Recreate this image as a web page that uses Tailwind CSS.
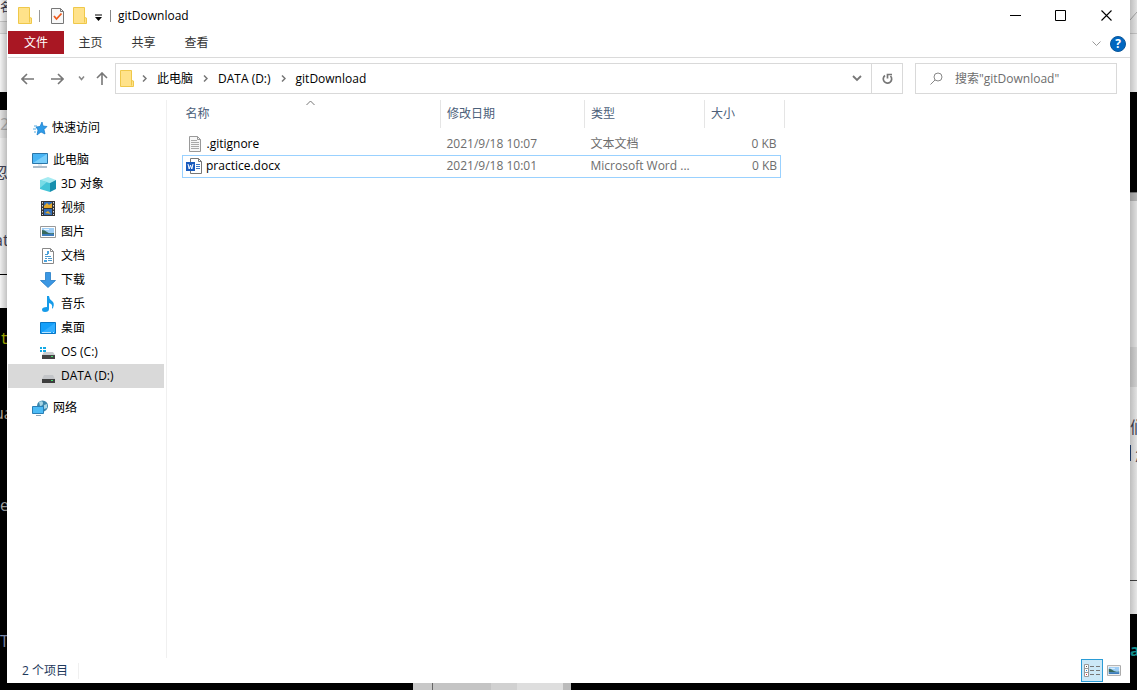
<!DOCTYPE html>
<html lang="zh-CN">
<head>
<meta charset="utf-8">
<title>gitDownload</title>
<script src="https://cdn.jsdelivr.net/npm/@tailwindcss/browser@4"></script>
</head>
<body class="h-screen overflow-hidden flex flex-col bg-black text-xs text-black font-['Open_Sans','Noto_Sans_CJK_SC',sans-serif]">
<svg class="hidden">
  <symbol id="folder" viewBox="0 0 14 17"><path d="M.5.5h11v10l2 .5v5.500H.5z" fill="#ffe28a" stroke="#efc84a"/><path d="M11.500 10v5.500" stroke="#efc84a"/></symbol>
  <symbol id="picture" viewBox="0 0 16 12"><path d="M.5.5h15v11H.5z" fill="#fff" stroke="#999"/><path d="M2 2h12v8H2z" fill="#9dcdf5"/><path d="M2 4q3 0 5 2t7 1v1H2z" fill="#37695c"/><path d="M2 8h12v2H2z" fill="#3d7cbb"/><path d="M4 3h5v1H4z" fill="#e9f6ff"/></symbol>
</svg>
<div class="flex-1 min-h-0 flex">

  <!-- page behind the window, left edge -->
  <div class="relative w-[7px] shrink-0 flex flex-col overflow-hidden whitespace-nowrap bg-black text-base" aria-hidden="true">
    <div class="h-[22px] bg-[#f1f1f1] border-b border-[#c4c4c4] text-[#334] leading-4 text-xs">名</div>
    <div class="h-[12px] bg-[#e4e4e4] border-b border-[#ccc]"></div>
    <div class="h-[58px] bg-[#f2f2f2]"></div>
    <div class="h-[18px] bg-black"></div>
    <div class="h-[28px] bg-[#e1e1e1] text-[#aaa] leading-7">2</div>
    <div class="h-[137px] bg-[#ededed] border-b border-black text-[#445] flex flex-col justify-around"><span class="leading-6 -ml-2">忽</span><span class="leading-6 -ml-1.5">at</span></div>
    <div class="h-[33px] bg-[#f3f3f3]"></div>
    <div class="flex-1 flex flex-col pt-5 text-[#aaa]"><span class="h-[73px] text-[#aab000] font-mono">t</span><span class="h-[92px] -ml-1.5 text-[#b9a99a]">ua</span><span class="h-[136px]">e</span><span class="text-[#8995b8]">T</span></div>
    <div class="absolute inset-0 bg-linear-to-r from-black/0 to-black/20"></div>
  </div>

  <main class="flex-1 min-w-0 bg-white flex flex-col">
    <header class="h-[31px] shrink-0 flex items-center pl-[11px]">
      <svg class="w-[14px] h-[17px]"><use href="#folder"/></svg>
      <span class="w-px h-3 bg-[#999] ml-[7px]"></span>
      <button aria-label="属性" class="ml-[11px]"><svg class="block" width="13" height="16" viewBox="0 0 13 16" fill="none"><path d="M.5.5h9l3 3v12H.5z" fill="#f8f8f8" stroke="#777"/><path d="M9.500.5v3h3" stroke="#777"/><path d="M3 8l2.500 3L10.500 5.500" stroke="#ee5a1c" stroke-width="1.800"/></svg></button>
      <button aria-label="新建文件夹" class="ml-[9px]"><svg class="block w-[14px] h-[17px]"><use href="#folder"/></svg></button>
      <button aria-label="自定义快速访问工具栏" class="ml-[7px] pt-1"><svg class="block" width="9" height="8" viewBox="0 0 9 8"><path d="M1 1h7" stroke="#000"/><path d="M1 3h7L4.500 7z"/></svg></button>
      <span class="w-px h-3 bg-[#888] ml-[7px]"></span>
      <h1 class="ml-[7px]">gitDownload</h1>
      <div class="ml-auto flex h-full">
        <button aria-label="最小化" class="w-[46px] grid place-items-center"><svg width="11" height="11"><path d="M0 5.500h11" stroke="#000"/></svg></button>
        <button aria-label="最大化" class="w-[45px] grid place-items-center"><svg width="11" height="11"><path d="M.5.5h10v10H.5z" fill="none" stroke="#000"/></svg></button>
        <button aria-label="关闭" class="w-[47px] grid place-items-center"><svg width="11" height="11"><path d="M.5.5l10 10M10.500.5l-10 10" stroke="#000" stroke-width="1.100"/></svg></button>
      </div>
    </header>

    <nav class="h-[27px] shrink-0 flex items-start ml-px border-b border-[#dadada] text-[#333]">
      <button class="w-14 h-[23px] bg-[#a91723] text-white">文件</button>
      <button class="w-[53px] h-6">主页</button>
      <button class="w-[53px] h-6">共享</button>
      <button class="w-[53px] h-6">查看</button>
      <button aria-label="展开功能区" class="ml-auto mt-2.5"><svg class="block" width="9" height="6" fill="none"><path d="M.5.5l4 4 4-4" stroke="#999"/></svg></button>
      <button aria-label="帮助" class="ml-[9px] mr-1 mt-[5px] size-4 rounded-full bg-[#0067c0] border border-[#0a569a] text-white font-bold leading-[14px]">?</button>
    </nav>

    <div class="shrink-0 flex items-center pt-[5px] pr-[13px] pl-3.5 pb-1.5">
      <button aria-label="后退"><svg class="block" width="13" height="12" fill="none" stroke="#777" stroke-width="1.600"><path d="M13 6H1M6 1L1 6l5 5"/></svg></button>
      <button aria-label="前进" class="ml-[17px]"><svg class="block" width="13" height="12" fill="none" stroke="#777" stroke-width="1.600"><path d="M0 6h12M7 1l5 5-5 5"/></svg></button>
      <button aria-label="最近位置" class="ml-3.5"><svg class="block" width="7" height="5" fill="none" stroke="#888" stroke-width="1.500"><path d="M1 .5l2.500 3L6 .5"/></svg></button>
      <button aria-label="上移" class="ml-[11px]"><svg class="block" width="12" height="13" fill="none" stroke="#777" stroke-width="1.600"><path d="M6 13V1M1 6l5-5 5 5"/></svg></button>
      <div class="ml-[7px] flex-1 h-[31px] border border-[#d9d9d9] flex items-center pl-1">
        <svg class="w-[14px] h-[17px]"><use href="#folder"/></svg>
        <svg class="ml-2" width="5" height="7" fill="none" stroke="#777" stroke-width="1.500"><path d="M1 .5l3 3-3 3"/></svg>
        <a href="#" class="ml-2.5">此电脑</a>
        <svg class="ml-2.5" width="5" height="7" fill="none" stroke="#777" stroke-width="1.500"><path d="M1 .5l3 3-3 3"/></svg>
        <a href="#" class="ml-2.5">DATA (D:)</a>
        <svg class="ml-2.5" width="5" height="7" fill="none" stroke="#777" stroke-width="1.500"><path d="M1 .5l3 3-3 3"/></svg>
        <a href="#" class="ml-2.5">gitDownload</a>
        <button aria-label="历史记录" class="ml-auto mr-[9px]"><svg class="block" width="10" height="7" fill="none" stroke="#777" stroke-width="1.800"><path d="M1 1l4 4 4-4"/></svg></button>
        <button aria-label="刷新" class="w-[31px] h-full border-l border-[#d9d9d9] grid place-items-center"><svg width="11" height="12" fill="none" stroke="#777" stroke-width="1.700"><path d="M3 2.500A4.200 4.200 0 1 0 8.500 3M5.500 5.500V1.500H10"/></svg></button>
      </div>
      <label class="ml-3 w-[202px] h-[31px] border border-[#d9d9d9] flex items-center pl-3.5">
        <svg width="13" height="13" fill="none" stroke="#888"><circle cx="8" cy="5" r="4"/><path d="M5 8L.5 12.500"/></svg>
        <input aria-label="搜索" placeholder='搜索"gitDownload"' class="ml-3 min-w-0 flex-1 outline-none placeholder:text-[#6d6d6d]">
      </label>
    </div>

    <div class="flex-1 min-h-0 flex">
      <aside class="w-[160px] shrink-0 border-r border-[#f0f0f0] pl-px pr-[2px] pt-4">
        <a href="#" class="h-6 flex items-center gap-1 pl-6"><svg width="16" height="16"><path d="M10 2l1 4 4 .5-3 3 1 4.500-4-2-4 3 1-5-2-3 4-.5z" fill="#2f9ce8" stroke="#1379c8" stroke-width=".7"/><path d="M2 6h3M1 9h3M2 12h2" stroke="#55a9df"/></svg>快速访问</a>
        <a href="#" class="mt-2 h-6 flex items-center gap-1 pl-6"><svg width="17" height="16"><path d="M.5 1.500h15v10H.5z" fill="#48b4f4" stroke="#2b76a8"/><path d="M1 11L15 2v9z" fill="#79cefa"/><path d="M1 15h14" stroke="#8199ad" stroke-width="1.300"/><path d="M6 13h4" stroke="#cdd7df"/></svg>此电脑</a>
        <a href="#" class="h-6 flex items-center gap-[5px] pl-8"><svg width="16" height="16"><path d="M0 4l8-3 8 3-6 3z" fill="#a5ebf2"/><path d="M0 4l10 3v9L0 13z" fill="#43c4d7"/><path d="M10 7l6-3v9l-6 3z" fill="#168fae"/><path d="M0 4l7 2-7 6z" fill="#78dce6"/></svg>3D 对象</a>
        <a href="#" class="h-6 flex items-center gap-[5px] pl-8"><svg width="16" height="16"><path d="M1 1h14v15H1z" fill="#333"/><path d="M2.500 2v13M13.500 2v13" stroke="#ddd" stroke-dasharray="1.500 1.500"/><path d="M4 2h8v6H4zM4 9h8v6H4z" fill="#326eb8"/><path d="M4 6l3-3 2 2 3-2v5H4zM5 13l3-2 3 3z" fill="#e3a82b"/></svg>视频</a>
        <a href="#" class="h-6 flex items-center gap-[5px] pl-8"><svg class="w-4 h-3"><use href="#picture"/></svg>图片</a>
        <a href="#" class="h-6 flex items-center gap-[5px] pl-8"><svg width="16" height="16" fill="none"><path d="M2.500.5h8l3 3v12h-11z" fill="#fff" stroke="#888"/><path d="M10.500.5v3h3" stroke="#888"/><path d="M5 6.500h3M5 8.500h6M5 10.500h2M8 10.500h4M8 12.500h4" stroke="#4c9bd0"/><path d="M4 12h3v2H4zM7 3h2v3H7z" fill="#4aa4df"/></svg>文档</a>
        <a href="#" class="h-6 flex items-center gap-[5px] pl-8"><svg width="16" height="16"><path d="M5.500.5h5v8h5L8 15.500.5 8.500h5z" fill="#3b97e3" stroke="#237bc5" stroke-width=".8"/></svg>下载</a>
        <a href="#" class="h-6 flex items-center gap-[5px] pl-8"><svg width="16" height="16"><path d="M7 0h2q0 3 3 5t1 7q-.5 1-1 0 1-4-3-5v6q0 3-4 3-3 0-3-2.500T7 11z" fill="#169be9"/></svg>音乐</a>
        <a href="#" class="h-6 flex items-center gap-[5px] pl-8"><svg width="16" height="16"><path d="M.5 2.500h15v11H.5z" fill="#15a0fa" stroke="#0876c5"/><path d="M1 13L15 3v9z" fill="#31aeff"/><path d="M2 12.500h9M13 12.500h1" stroke="#b8e4ff"/></svg>桌面</a>
        <a href="#" class="h-6 flex items-center gap-[5px] pl-8"><svg width="16" height="16"><path d="M0 3h2v2H0zM3 3h3v2H3zM0 6h2v2H0zM3 6h3v2H3z" fill="#14a9e4"/><path d="M4 8h9l2 3H2z" fill="#c9cccf"/><path d="M2 11h13v4H2z" fill="#444"/><path d="M11 12h2v1h-2z" fill="#45e06a"/></svg>OS (C:)</a>
        <a href="#" class="h-6 flex items-center gap-[5px] pl-8 bg-[#d9d9d9]"><svg width="16" height="16"><path d="M4 7h9l2 4H2z" fill="#c3c5c8"/><path d="M2 11h13v4H2z" fill="#3e3e3e"/><path d="M11 12h2v1h-2z" fill="#45e06a"/></svg>DATA (D:)</a>
        <a href="#" class="mt-2 h-6 flex items-center gap-1 pl-6"><svg width="17" height="16"><circle cx="10.500" cy="6" r="5.500" fill="#3b86ab"/><path d="M7 2q4-2 4 1t-3 3zM12 5l3-1v4l-3 1z" fill="#a8d6e5"/><path d="M.5 6.500h11v7H.5z" fill="#4dbbf5" stroke="#2a7fb5"/><path d="M4 15.500h5" stroke="#8aa4b5"/></svg>网络</a>
      </aside>

      <section class="flex-1 min-w-0 pl-[15px]">
        <table class="w-[602px] table-fixed border-collapse text-[#6d6d6d]">
          <colgroup><col class="w-[258px]"><col class="w-[144px]"><col class="w-[120px]"><col class="w-[76px]"><col class="w-[4px]"></colgroup>
          <thead class="text-left text-[#4c607a]">
            <tr class="h-[28px]">
              <th class="relative p-0 pl-[3px] font-normal border-r border-[#e5e5e5]">名称<svg class="absolute left-[123px] top-0" width="9" height="6" fill="none" stroke="#777"><path d="M.5 5l4-4 4 4"/></svg></th>
              <th class="p-0 pl-1.5 font-normal border-r border-[#e5e5e5]">修改日期</th>
              <th class="p-0 pl-1.5 font-normal border-r border-[#e5e5e5]">类型</th>
              <th class="p-0 pl-1.5 font-normal">大小</th>
              <td class="p-0 border-r border-[#e5e5e5]"></td>
            </tr>
          </thead>
          <tbody>
            <tr class="h-[5px]"><td colspan="5" class="p-0"></td></tr>
            <tr class="h-[22px]">
              <td class="p-0 pl-1 text-black"><div class="flex items-center gap-1"><svg width="16" height="16" fill="none"><path d="M2.500.5h8l3 3v12h-11z" fill="#f7f7f7" stroke="#999"/><path d="M10.500.5v3h3" stroke="#999"/><path d="M4 4.500h6M4 6.500h8M4 8.500h8M4 10.500h8M4 12.500h8" stroke="#aaa"/></svg>.gitignore</div></td>
              <td class="p-0 pl-1.5">2021/9/18 10:07</td><td class="p-0 pl-1.5">文本文档</td><td class="p-0 pr-1 text-right">0 KB</td><td class="p-0"></td>
            </tr>
            <tr class="h-[22px]">
              <td class="p-0 pl-[3px] text-black border border-r-0 border-[#99d1ff]"><div class="flex items-center gap-1"><svg width="16" height="16" fill="none"><path d="M4.500.5h8l3 3v12h-11z" fill="#fff" stroke="#777"/><path d="M12.500.5v3h3" stroke="#777"/><path d="M10 6.500h4M10 8.500h4M10 10.500h4" stroke="#3d76c4"/><path d="M0 4h9v9H0z" fill="#185abd"/><path d="M2 6l1.200 5L4.500 7l1.300 4L7 6" stroke="#fff"/></svg>practice.docx</div></td>
              <td class="p-0 pl-1.5 border-y border-[#99d1ff]">2021/9/18 10:01</td><td class="p-0 pl-1.5 border-y border-[#99d1ff] whitespace-nowrap">Microsoft Word ...</td><td class="p-0 pr-[3px] text-right border-y border-r border-[#99d1ff]">0 KB</td><td class="p-0"></td>
            </tr>
          </tbody>
        </table>
      </section>
    </div>

    <footer class="h-[25px] shrink-0 flex items-center pl-[15px] pr-[9px] text-[#1e395b]">
      <span>2 个项目</span><span class="ml-2.5 w-px h-4 bg-[#f0f0f0]"></span>
      <button aria-label="详细信息" class="ml-auto w-[22px] h-[23px] bg-[#cce8f7] border border-[#2a9cd6] grid place-items-center"><svg width="16" height="13" fill="none"><path d="M.5.5h4v12h-4zM.5 4.500h4M.5 8.500h4" fill="#fff" stroke="#999"/><path d="M2 2.500h1" stroke="#555"/><path d="M2 6.500h1" stroke="#2a8ad6"/><path d="M2 10.500h1" stroke="#d33"/><path d="M6 2.500h4M12 2.500h4M6 6.500h4M12 6.500h4M6 10.500h4M12 10.500h4" stroke="#777"/></svg></button>
      <button aria-label="大图标" class="ml-1"><svg class="block w-[14px] h-[11px]" ><use href="#picture"/></svg></button>
    </footer>
  </main>

  <!-- page behind the window, right edge -->
  <div class="relative w-[7px] shrink-0 flex flex-col overflow-hidden whitespace-nowrap bg-black" aria-hidden="true">
    <div class="h-[34px] bg-[#eee] border-b border-[#ccc] pt-2.5"><svg class="block" width="7" height="10"><path d="M0 10L7 2" stroke="#aaa"/></svg></div>
    <div class="h-[58px] bg-[#f5f5f5]"></div>
    <div class="h-[101px] bg-black border-b border-[#777]"></div>
    <div class="h-2 bg-[#bbb]"></div>
    <div class="h-[146px] bg-[#eaeaea]"></div>
    <div class="h-10 bg-[#dadada]"></div>
    <div class="h-[194px] bg-[#eee] border-b border-[#444] pt-[26px] text-base text-[#445]"><div class="leading-7">们</div><div class="leading-7 flex"><span class="w-px h-4 mt-1 mr-1 shrink-0 bg-[#247]"></span>忽</div></div>
    <div class="h-[33px] bg-[#f3f3f3]"></div>
    <div class="flex-1 pt-6 text-base text-[#12a0a0] font-bold">a</div>
    <div class="absolute inset-0 bg-linear-to-r from-black/20 to-black/5"></div>
  </div>
</div>

<!-- page behind the window, bottom edge -->
<div class="h-[7px] shrink-0 flex bg-black" aria-hidden="true">
  <div class="w-[413px] shrink-0"></div>
  <div class="w-[19px] bg-[#c8c8c8]"></div>
  <div class="w-px bg-[#666]"></div>
  <div class="w-[58px] bg-[#c4c4c4]"></div>
  <div class="w-[26px] bg-[#d1d1d1]"></div>
  <div class="w-[46px] bg-[#dedede]"></div>
  <div class="w-2 bg-[#bbb]"></div>
</div>
</body>
</html>
